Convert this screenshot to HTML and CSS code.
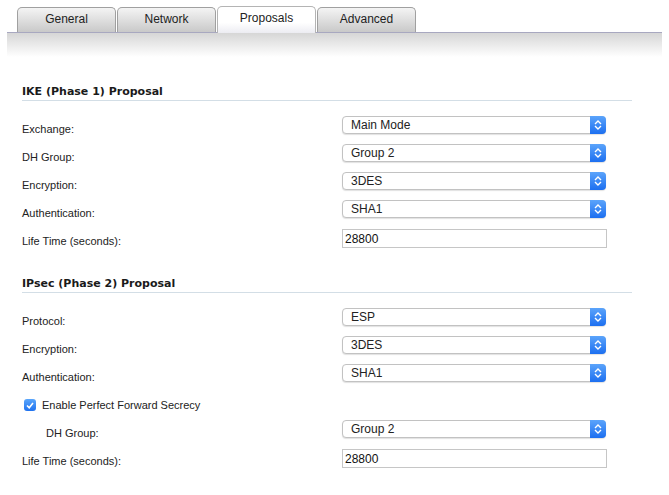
FILE: index.html
```html
<!DOCTYPE html>
<html lang="en">
<head>
  <meta charset="UTF-8" />
  <title>VPN Policy - Proposals</title>
  <link rel="stylesheet" href="styles.css">
</head>
<body>
  <div class="tabs">
    <div class="tab">General</div>
    <div class="tab">Network</div>
    <div class="tab active">Proposals</div>
    <div class="tab">Advanced</div>
  </div>
  <div class="tab-shade"></div>

  <div class="content">
    <h3 class="section-title first">IKE (Phase 1) Proposal</h3>
    <div class="row">
      <label>Exchange:</label>
      <div class="select"><span>Main Mode</span><i class="arrows"><svg width="8" height="10" viewBox="0 0 8 10"><path d="M1 4 L4 1 L7 4 M1 6 L4 9 L7 6" fill="none" stroke="#fff" stroke-width="1.4"/></svg></i></div>
    </div>
    <div class="row">
      <label>DH Group:</label>
      <div class="select"><span>Group 2</span><i class="arrows"><svg width="8" height="10" viewBox="0 0 8 10"><path d="M1 4 L4 1 L7 4 M1 6 L4 9 L7 6" fill="none" stroke="#fff" stroke-width="1.4"/></svg></i></div>
    </div>
    <div class="row">
      <label>Encryption:</label>
      <div class="select"><span>3DES</span><i class="arrows"><svg width="8" height="10" viewBox="0 0 8 10"><path d="M1 4 L4 1 L7 4 M1 6 L4 9 L7 6" fill="none" stroke="#fff" stroke-width="1.4"/></svg></i></div>
    </div>
    <div class="row">
      <label>Authentication:</label>
      <div class="select"><span>SHA1</span><i class="arrows"><svg width="8" height="10" viewBox="0 0 8 10"><path d="M1 4 L4 1 L7 4 M1 6 L4 9 L7 6" fill="none" stroke="#fff" stroke-width="1.4"/></svg></i></div>
    </div>
    <div class="row">
      <label>Life Time (seconds):</label>
      <input class="text" type="text" value="28800">
    </div>

    <h3 class="section-title">IPsec (Phase 2) Proposal</h3>
    <div class="row">
      <label>Protocol:</label>
      <div class="select"><span>ESP</span><i class="arrows"><svg width="8" height="10" viewBox="0 0 8 10"><path d="M1 4 L4 1 L7 4 M1 6 L4 9 L7 6" fill="none" stroke="#fff" stroke-width="1.4"/></svg></i></div>
    </div>
    <div class="row">
      <label>Encryption:</label>
      <div class="select"><span>3DES</span><i class="arrows"><svg width="8" height="10" viewBox="0 0 8 10"><path d="M1 4 L4 1 L7 4 M1 6 L4 9 L7 6" fill="none" stroke="#fff" stroke-width="1.4"/></svg></i></div>
    </div>
    <div class="row">
      <label>Authentication:</label>
      <div class="select"><span>SHA1</span><i class="arrows"><svg width="8" height="10" viewBox="0 0 8 10"><path d="M1 4 L4 1 L7 4 M1 6 L4 9 L7 6" fill="none" stroke="#fff" stroke-width="1.4"/></svg></i></div>
    </div>
    <div class="row check-row">
      <span class="checkbox"><svg width="8" height="7" viewBox="0 0 8 7"><path d="M1 3.5 L3.2 5.8 L7 1" fill="none" stroke="#fff" stroke-width="1.6"/></svg></span>
      <span class="check-label">Enable Perfect Forward Secrecy</span>
    </div>
    <div class="row">
      <label class="indent">DH Group:</label>
      <div class="select"><span>Group 2</span><i class="arrows"><svg width="8" height="10" viewBox="0 0 8 10"><path d="M1 4 L4 1 L7 4 M1 6 L4 9 L7 6" fill="none" stroke="#fff" stroke-width="1.4"/></svg></i></div>
    </div>
    <div class="row">
      <label>Life Time (seconds):</label>
      <input class="text" type="text" value="28800">
    </div>
  </div>
</body>
</html>
```

FILE: styles.css
```css
body {
  margin: 0;
  background: #fff;
  font-family: "Liberation Sans", Arial, sans-serif;
  color: #222;
}

.tabs {
  display: flex;
  gap: 1px;
  margin: 0 7px;
  padding: 7px 0 0 10px;
  height: 25px;
  border-bottom: 1px solid #a8a8c0;
}

.tab {
  box-sizing: border-box;
  width: 99px;
  height: 25px;
  border: 1px solid #a0a0a0;
  border-bottom: none;
  border-radius: 5px 5px 0 0;
  background: linear-gradient(#f4f4f4, #c9c9c9);
  font-size: 12px;
  color: #222;
  text-align: center;
  line-height: 22px;
}

.tab.active {
  height: 27px;
  margin-top: -1px;
  margin-bottom: -1px;
  background: linear-gradient(#ffffff 60%, #ececf2);
  border-color: #b4b4b4;
  position: relative;
  z-index: 1;
}

.tab-shade {
  margin: 0 7px;
  height: 24px;
  background: linear-gradient(#d6d6d6, #ffffff);
}

.content {
  padding: 0 0 0 22px;
  width: 610px;
}

.section-title {
  margin: 24px 0 12px;
  padding-bottom: 1px;
  font-family: "DejaVu Sans", Verdana, sans-serif;
  font-size: 11px;
  font-weight: bold;
  line-height: 14px;
  color: #1a1a1a;
  border-bottom: 1px solid #d3dee6;
}

.section-title.first {
  margin-top: 28px;
}

.row {
  display: flex;
  align-items: flex-start;
  height: 28px;
}

.row label {
  width: 320px;
  padding-top: 9px;
  font-size: 11px;
  line-height: 14px;
}

.row label.indent {
  width: 296px;
  padding-left: 24px;
}

.select {
  box-sizing: border-box;
  display: flex;
  align-items: center;
  justify-content: space-between;
  margin-top: 3px;
  width: 264px;
  height: 18px;
  border: 1px solid #c2c2c2;
  border-radius: 4px;
  background: #fff;
  box-shadow: 0 1px 1px rgba(0, 0, 0, 0.12);
  font-size: 12px;
}

.select span {
  padding-left: 8px;
}

.arrows {
  display: flex;
  align-items: center;
  justify-content: center;
  width: 16px;
  height: 18px;
  margin: -1px -1px -1px 0;
  border-radius: 0 4px 4px 0;
  background: linear-gradient(#5ba4fb, #1c6ff0);
}

.text {
  box-sizing: border-box;
  margin: 4px 0 0;
  width: 265px;
  height: 19px;
  padding: 1px 2px;
  border: 1px solid #c6c6c6;
  font-family: "Liberation Sans", Arial, sans-serif;
  font-size: 12px;
  color: #111;
}

.check-row {
  align-items: center;
  padding-top: 4px;
  box-sizing: border-box;
}

.checkbox {
  display: flex;
  align-items: center;
  justify-content: center;
  margin-left: 2px;
  width: 12px;
  height: 12px;
  border-radius: 3px;
  background: linear-gradient(#5aa6fb, #1f72ef);
}

.check-label {
  margin-left: 6px;
  font-size: 11px;
}
```
